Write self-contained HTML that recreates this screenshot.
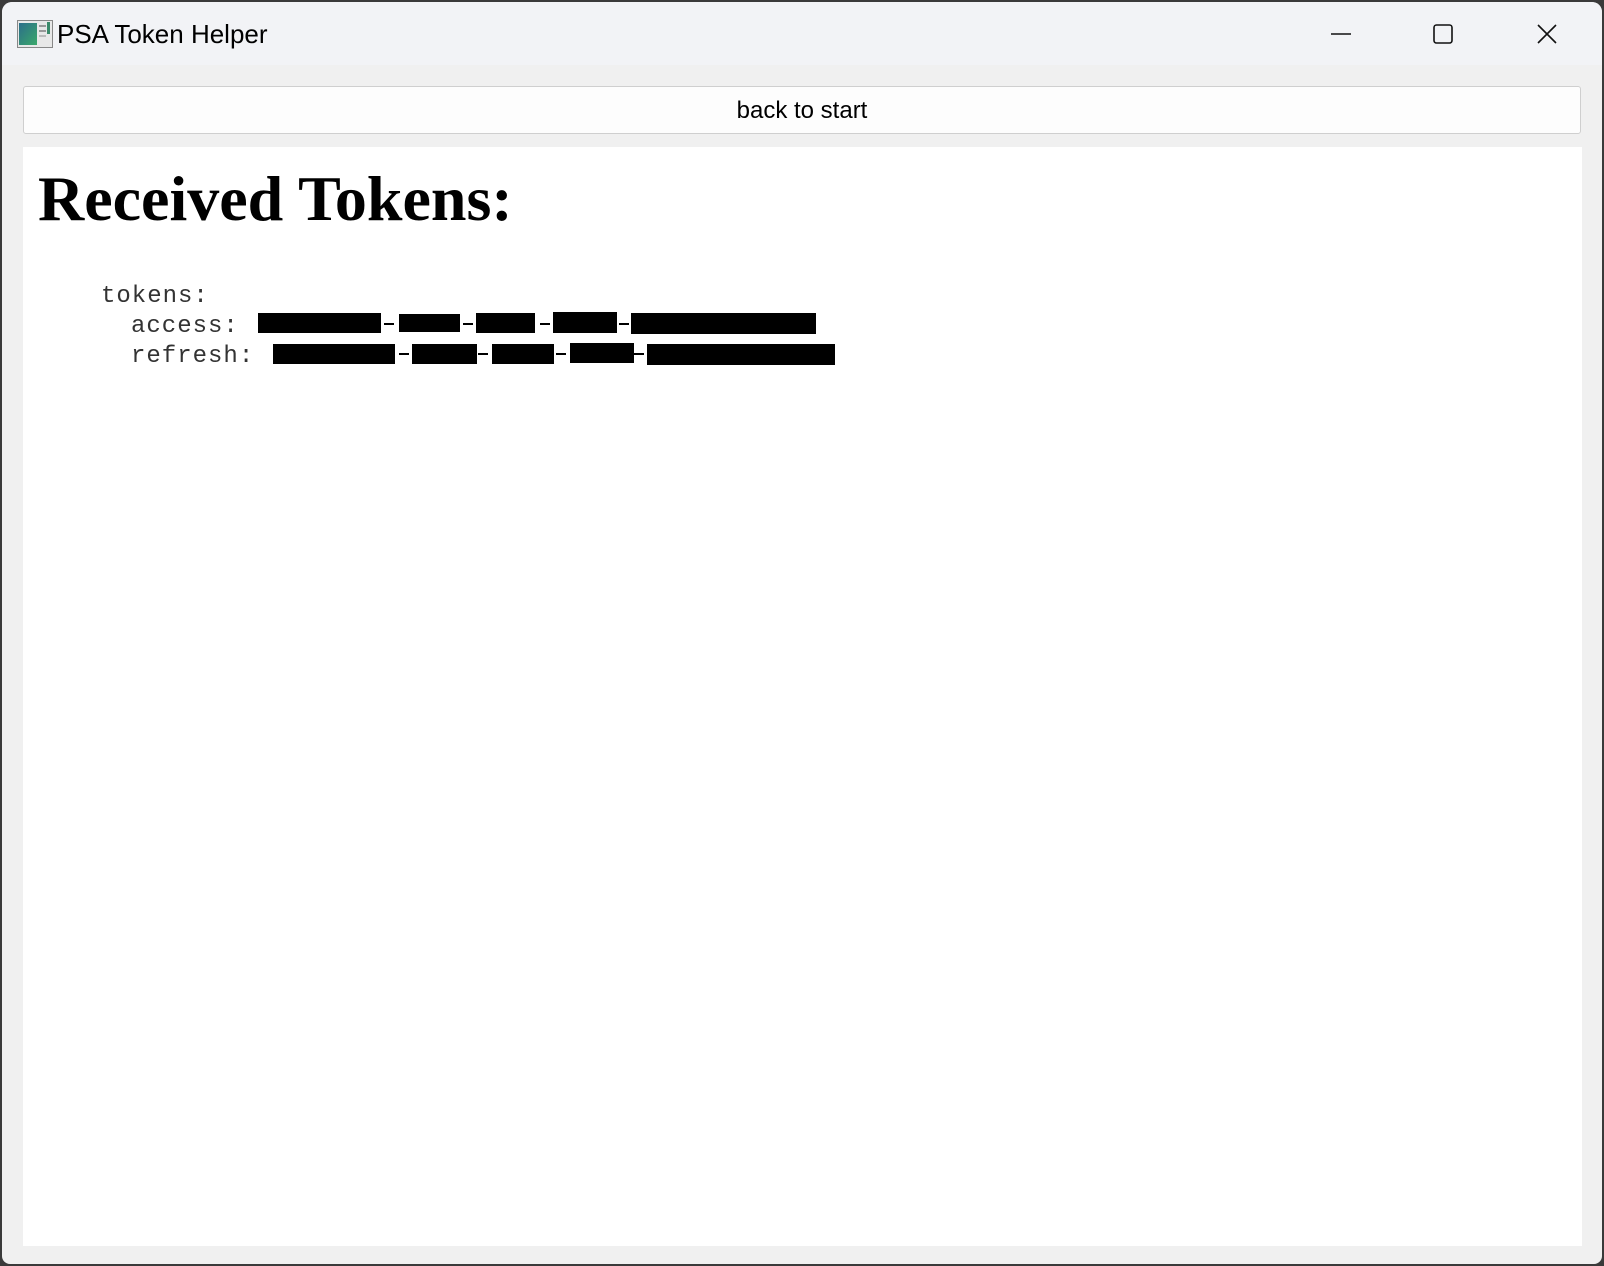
<!DOCTYPE html>
<html><head><meta charset="utf-8"><style>
html,body{margin:0;padding:0;}
body{width:1604px;height:1266px;background:#3a3a3a;position:relative;overflow:hidden;font-family:"Liberation Sans",sans-serif;}
.win{position:absolute;left:2px;top:2px;width:1600px;height:1262px;background:#f0f0f0;border-radius:10px 10px 8px 8px;overflow:hidden;}
.title{position:absolute;left:0;top:0;width:1600px;height:63px;background:#f2f3f6;}
.ttext{position:absolute;left:55px;top:17px;font-size:26px;color:#000;}
.btn{position:absolute;left:21px;top:84px;width:1556px;height:46px;background:#fdfdfd;border:1px solid #cfcfcf;border-radius:3px;}
.btxt{position:absolute;left:0;width:100%;top:10px;text-align:center;font-size:24px;color:#000;}
.content{position:absolute;left:23px;top:147px;width:1559px;height:1099px;background:#fff;}
h1{position:absolute;left:38px;top:162px;margin:0;font-family:"Liberation Serif",serif;font-weight:bold;font-size:64px;color:#000;white-space:nowrap;}
.mono{position:absolute;font-family:"Liberation Mono",monospace;font-size:24px;color:#333;letter-spacing:1px;white-space:pre;}
.r{position:absolute;background:#000;}
.d{position:absolute;background:#000;height:2px;width:10px;}
</style></head><body>
<div class="win">
 <div class="title">
  <svg style="position:absolute;left:15px;top:18px" width="36" height="28" viewBox="0 0 36 28">
   <rect x="0.5" y="0.5" width="35" height="27" fill="#e8e8e8" stroke="#888"/>
   <defs><linearGradient id="g" x1="0" y1="0" x2="1" y2="1"><stop offset="0" stop-color="#2c6e8a"/><stop offset="1" stop-color="#3aa86a"/></linearGradient></defs>
   <rect x="2" y="3" width="18" height="22" fill="url(#g)"/>
   <rect x="22" y="5" width="7" height="2" fill="#999"/><rect x="22" y="10" width="7" height="2" fill="#999"/><rect x="22" y="15" width="7" height="2" fill="#bbb"/>
   <rect x="30" y="2" width="3" height="12" fill="#3a8a6a"/>
  </svg>
  <div class="ttext">PSA Token Helper</div>
  <svg style="position:absolute;left:1325px;top:22px" width="280" height="26" viewBox="0 0 280 26">
   <line x1="4" y1="10" x2="24" y2="10" stroke="#111" stroke-width="1.6"/>
   <rect x="107" y="1" width="18" height="18" rx="2.5" fill="none" stroke="#111" stroke-width="1.6"/>
   <path d="M211 1 L229 19 M229 1 L211 19" stroke="#111" stroke-width="1.6"/>
  </svg>
 </div>
 <div class="btn"><div class="btxt">back to start</div></div>
</div>
<div class="content"></div>
<h1>Received Tokens:</h1>
<div class="mono" style="left:101px;top:283px">tokens:</div>
<div class="mono" style="left:131px;top:313px">access:</div>
<div class="mono" style="left:131px;top:343px">refresh:</div>
<div class="r" style="left:258px;top:313px;width:123px;height:20px"></div>
<div class="d" style="left:384px;top:323px"></div>
<div class="r" style="left:399px;top:314px;width:61px;height:18px"></div>
<div class="d" style="left:463px;top:323px"></div>
<div class="r" style="left:476px;top:313px;width:59px;height:20px"></div>
<div class="d" style="left:540px;top:323px"></div>
<div class="r" style="left:553px;top:312px;width:64px;height:21px"></div>
<div class="d" style="left:619px;top:323px"></div>
<div class="r" style="left:631px;top:313px;width:185px;height:21px"></div>
<div class="r" style="left:273px;top:344px;width:122px;height:20px"></div>
<div class="d" style="left:399px;top:353px"></div>
<div class="r" style="left:412px;top:344px;width:65px;height:20px"></div>
<div class="d" style="left:478px;top:353px"></div>
<div class="r" style="left:492px;top:344px;width:62px;height:20px"></div>
<div class="d" style="left:556px;top:353px"></div>
<div class="r" style="left:570px;top:343px;width:64px;height:20px"></div>
<div class="d" style="left:634px;top:353px"></div>
<div class="r" style="left:647px;top:344px;width:188px;height:21px"></div>
</body></html>
